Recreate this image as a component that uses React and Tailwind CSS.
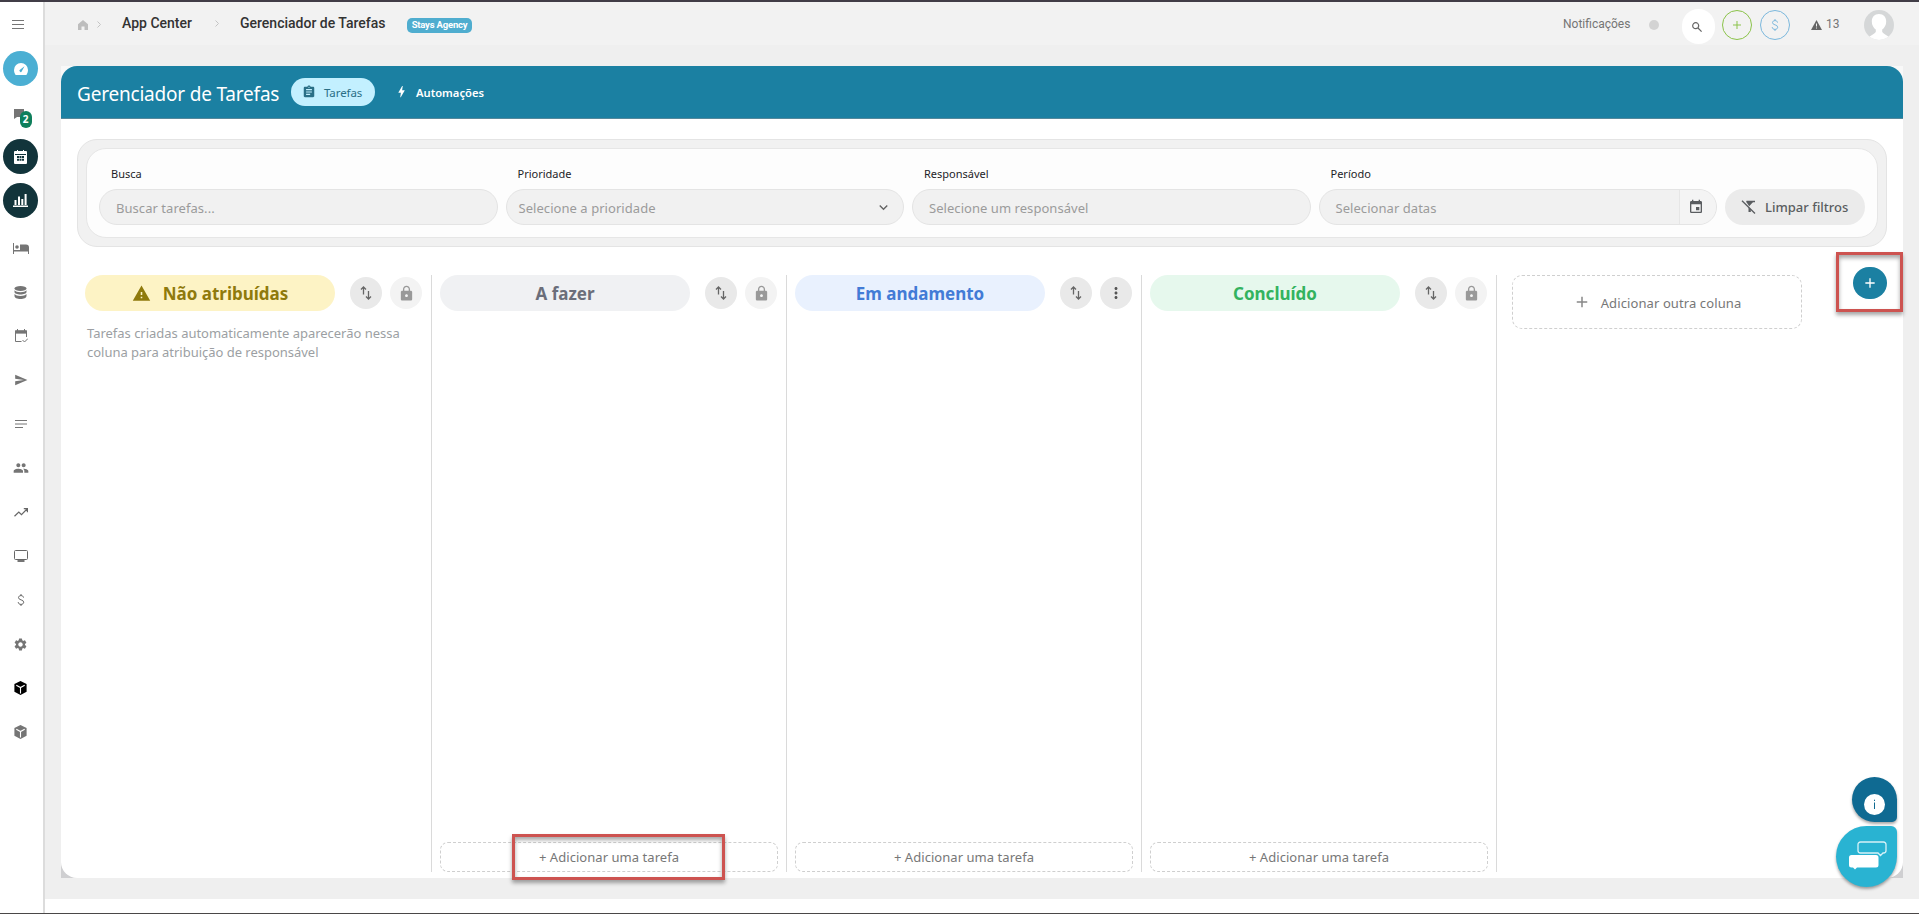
import React from "react";
import {
  MdAssignment,
  MdBolt,
  MdWarning,
  MdLock,
  MdMoreVert,
  MdEvent,
  MdKeyboardArrowDown,
  MdAdd,
  MdPeople,
  MdSettings,
  MdSend,
} from "react-icons/md";

const columns = [
  {
    title: "Não atribuídas",
    pill: "bg-[#fdf3c5] text-[#8f7a0c]",
    warning: true,
    locked: true,
    description:
      "Tarefas criadas automaticamente aparecerão nessa coluna para atribuição de responsável",
  },
  { title: "A fazer", pill: "bg-[#f0f1f3] text-[#6b6e7a]", locked: true, canAdd: true, highlight: true },
  { title: "Em andamento", pill: "bg-[#e9f1fe] text-[#427bd6]", locked: false, canAdd: true },
  { title: "Concluído", pill: "bg-[#e6f8ed] text-[#33b35f]", locked: true, canAdd: true },
];

function Gauge() {
  return (
    <svg width="14" height="12" viewBox="0 0 14 12">
      <path d="M7 0a7 7 0 0 0-7 7c0 1.900.7 3.500 1.600 5h10.800c.9-1.500 1.600-3.100 1.600-5a7 7 0 0 0-7-7z" fill="#fff" />
      <path d="M10.500 3.200 6.300 6.600a1.200 1.200 0 1 0 1.500 1.600z" fill="#4bafd3" />
    </svg>
  );
}

function Calendar() {
  return (
    <svg width="13" height="14" viewBox="0 0 13 14">
      <path fill="#fff" d="M1 1h2V0h1v1h5V0h1v1h2a1 1 0 0 1 1 1v11a1 1 0 0 1-1 1H1a1 1 0 0 1-1-1V2a1 1 0 0 1 1-1z" />
      <path fill="#12343b" d="M1 4h11v1H1zM3 6h2v2H3zM5.500 6h2v2h-2zM8 6h2v2H8zM3 8.700h2v2H3zM5.500 8.700h2v2h-2zM8 8.700h2v2H8z" />
    </svg>
  );
}

function Chart() {
  return (
    <svg width="15" height="13" viewBox="0 0 15 13" fill="#fff">
      <path d="M0 11.500h15V13H0zM1.500 6h2v5h-2zM5 2.500h2V11H5zM8.300 5h2v6h-2zM11.600 0h2v11h-2z" />
    </svg>
  );
}

function Bed() {
  return (
    <svg width="16" height="11" viewBox="0 0 16 11" fill="#757575">
      <path d="M0 0h1v7h6V1.500h6a3 3 0 0 1 3 3V11h-1V8.500H1V11H0z" />
      <circle cx="4" cy="4" r="1.800" />
    </svg>
  );
}

function Database() {
  return (
    <svg width="13" height="13" viewBox="0 0 13 13" fill="#757575">
      <ellipse cx="6.500" cy="2.500" rx="6" ry="2.500" />
      <path d="M.5 4.300c1 1.300 3.200 1.900 6 1.900s5-.6 6-1.900v1.600c0 1.400-2.700 2.500-6 2.500s-6-1.100-6-2.500zM.5 8c1 1.300 3.200 1.900 6 1.900s5-.6 6-1.900v1.900C12.500 11.600 9.800 13 6.500 13s-6-1.400-6-3.100z" />
    </svg>
  );
}

function CalendarCheck() {
  return (
    <svg width="14" height="14" viewBox="0 0 14 14" fill="none" stroke="#757575">
      <path d="M12.500 8V2h-11v10.500h6M8.500 11l2 2 3.500-3.500" />
      <path d="M1 1.500h12v3H1zM3 0h1v2H3zM10 0h1v2h-1z" fill="#757575" stroke="none" />
      <path d="M1.500 3h11" strokeWidth="2.500" />
    </svg>
  );
}

function Notes() {
  return (
    <svg width="12" height="8" viewBox="0 0 12 8" stroke="#757575">
      <path d="M0 .5h12M0 4h12M0 7.500h8" />
    </svg>
  );
}

function Trending() {
  return (
    <svg width="14" height="9" viewBox="0 0 14 9" fill="none" stroke="#666" strokeWidth="1.200">
      <path d="M.5 8.200 4.800 4l2.700 2.700L13 1M9.800.7h3.600v3.500" />
    </svg>
  );
}

function Monitor() {
  return (
    <svg width="14" height="12" viewBox="0 0 14 12" fill="none" stroke="#666">
      <rect x=".5" y=".5" width="13" height="9" rx="1" />
      <path d="M3.500 11h7" strokeWidth="1.800" />
    </svg>
  );
}

function Dollar({ color }) {
  return (
    <svg width="8" height="12" viewBox="0 0 8 12" fill="none" stroke={color}>
      <path d="M6.500 3.600C6.400 2.300 5.400 1.600 4 1.600S1.500 2.400 1.500 3.600C1.500 6.500 6.700 5.200 6.700 8.200c0 1.300-1.100 2.200-2.700 2.200S1.300 9.600 1.200 8.100M4 0v1.600M4 10.400V12" />
    </svg>
  );
}

function Cube({ color }) {
  return (
    <svg width="13" height="14" viewBox="0 0 13 14">
      <path d="M6.500 0 12.600 3v7.700L6.500 14 .4 10.700V3z" fill={color} />
      <path d="M2.300 4.200 6.500 6.500l4.200-2.300M6.500 6.500v6" fill="none" stroke="#fff" strokeWidth="1.100" />
    </svg>
  );
}

function Messages() {
  return (
    <span className="relative block h-3.5 w-4">
      <svg width="10" height="10" viewBox="0 0 10 10" className="absolute left-[1px] top-[-1px]">
        <path d="M0 0h10v8H3L0 10z" fill="#757575" />
      </svg>
      <span className="absolute left-[7px] top-[1px] flex h-[17px] w-[12px] items-center justify-center rounded-full bg-[#0f7f5c] text-[10px] font-bold text-white">
        2
      </span>
    </span>
  );
}

const menu = [
  { icon: <Gauge />, circle: "bg-[#4bafd3]" },
  { icon: <Messages />, circle: "pt-[8px]" },
  { icon: <Calendar />, circle: "bg-[#12343b]" },
  { icon: <Chart />, circle: "bg-[#12343b]" },
  { icon: <Bed />, circle: "pt-[7px]" },
  { icon: <Database />, circle: "pt-[7px]" },
  { icon: <CalendarCheck />, circle: "pt-[7px]" },
  { icon: <MdSend size={14} />, circle: "pt-[6px]" },
  { icon: <Notes />, circle: "pt-[6px]" },
  { icon: <MdPeople size={16} />, circle: "pt-[7px]" },
  { icon: <Trending />, circle: "pt-[7px]" },
  { icon: <Monitor />, circle: "pt-[7px]" },
  { icon: <Dollar color="#666" />, circle: "pt-[6px]" },
  { icon: <MdSettings size={15} />, circle: "pt-[7px]" },
  { icon: <Cube color="#000" />, circle: "pt-[6px]" },
  { icon: <Cube color="#757575" />, circle: "pt-[6px]" },
];

function Sidebar() {
  return (
    <aside className="flex w-[45px] shrink-0 flex-col border-r-2 border-[#dcdcdc] bg-white pl-[3px] text-[#757575]">
      <div className="flex h-[44px] items-center pl-[9px]">
        <svg width="12" height="9" viewBox="0 0 12 9" stroke="#757575">
          <path d="M0 .5h12M0 4.500h12M0 8.500h12" />
        </svg>
      </div>
      <nav className="flex flex-col gap-[9px] pt-[5px]">
        {menu.map((item, index) => (
          <div key={index} className={`flex size-[35px] items-center justify-center rounded-full ${item.circle}`}>
            {item.icon}
          </div>
        ))}
      </nav>
    </aside>
  );
}

function Chevron() {
  return (
    <svg width="4" height="7" viewBox="0 0 4 7" fill="none" stroke="#c4c4c4">
      <path d="M.5.5l3 3-3 3" />
    </svg>
  );
}

function TopBar() {
  return (
    <header className="flex h-[43px] items-center bg-[#f2f2f2] pl-[33px] pr-[25px] font-[Roboto]">
      <div className="flex w-[44px] items-center gap-[9px] pt-[2px]">
        <svg width="10" height="10" viewBox="0 0 10 10" fill="#bdbdbd">
          <path d="M5 0l5 4.200V10H6.500V6.500h-3V10H0V4.200z" />
        </svg>
        <Chevron />
      </div>
      <div className="flex w-[118px] items-center gap-[23px]">
        <span className="w-[70px] whitespace-nowrap pb-[2px] text-sm font-medium leading-5 text-[#333]">App Center</span>
        <Chevron />
      </div>
      <span className="w-[167px] whitespace-nowrap pb-[2px] text-sm font-medium leading-5 text-[#333]">Gerenciador de Tarefas</span>
      <span className="mt-[3px] flex h-[15px] w-[65px] items-center justify-center whitespace-nowrap rounded-[5px] bg-[#4fadcf] text-[9.500px] font-bold tracking-[-0.2px] text-white">
        Stays Agency
      </span>

      <div className="ml-auto flex items-center">
        <span className="mr-[19px] w-[67px] whitespace-nowrap text-xs text-[#757575]">Notificações</span>
        <span className="mr-[23px] mt-[3px] size-[10px] rounded-full bg-[#d3d3d3]" />
        <span className="mr-[7px] mt-[6px] flex h-[35px] w-[33px] items-center justify-center rounded-full bg-white pr-[3px]">
          <svg width="10" height="10" viewBox="0 0 10 10" fill="none" stroke="#666" strokeWidth="1.200">
            <circle cx="3.700" cy="3.700" r="3" />
            <path d="M6 6l3.600 3.600" />
          </svg>
        </span>
        <span className="mr-[8px] mt-[3px] flex size-[30px] items-center justify-center rounded-full border border-[#8bc34a]">
          <svg width="8" height="8" viewBox="0 0 8 8" stroke="#8bc34a">
            <path d="M4 0v8M0 4h8" />
          </svg>
        </span>
        <span className="mr-[21px] mt-[3px] flex size-[30px] items-center justify-center rounded-full border border-[#7bb8dd]">
          <Dollar color="#7bb8dd" />
        </span>
        <svg width="11" height="10" viewBox="0 0 11 10" className="mr-[4px] mt-[3px]">
          <path d="M5.500 0 11 10H0z" fill="#666" />
          <path d="M5.500 3.500v3M5.500 7.500v1" stroke="#f2f2f2" />
        </svg>
        <span className="mr-[25px] w-[13px] text-xs text-[#757575]">13</span>
        <svg width="30" height="30" viewBox="0 0 30 30" className="mt-[3px] rounded-full">
          <rect width="30" height="30" fill="#d5d7d8" />
          <path d="M15 4c-4.500 0-7.200 3-7.200 7.500 0 3.800 1.800 6.500 4 8v2.500C10 24.500 7 25 4.500 27.500L8 31h14l3.500-3.500C23 25 20 24.500 18.200 22v-2.500c2.200-1.500 4-4.200 4-8C22.200 7 19.500 4 15 4z" fill="#fff" />
        </svg>
      </div>
    </header>
  );
}

function Field({ label, placeholder, className = "pl-4", children }) {
  return (
    <div className="flex w-[398.5px] flex-col">
      <label className="h-[24px] pl-3 text-[11px] leading-[18px] text-[#1d1d28]">{label}</label>
      <div className={`flex h-9 items-center overflow-hidden rounded-[18px] border border-[#e4e4e4] bg-[#f1f1f1] ${className}`}>
        <span className="flex-1 pt-[2px] text-[13px] leading-5 tracking-[0.05px] text-[#9b9b9b]">{placeholder}</span>
        {children}
      </div>
    </div>
  );
}

function Filters() {
  return (
    <section className="mx-4 mt-5 rounded-[20px] border border-[#e4e4e4] bg-[#f1f1f1] px-[8px] py-[8px]">
      <div className="flex h-[90px] items-end gap-2 rounded-[20px] border border-[#e6e6e6] bg-[#fdfdfd] pb-[12px] pl-[12px]">
        <Field label="Busca" placeholder="Buscar tarefas..." />
        <Field label="Prioridade" placeholder="Selecione a prioridade" className="pl-[12px] pr-[11px]">
          <MdKeyboardArrowDown size={17} className="text-[#666]" />
        </Field>
        <Field label="Responsável" placeholder="Selecione um responsável" />
        <Field label="Período" placeholder="Selecionar datas">
          <span className="flex h-9 w-[37px] items-center justify-center border-l border-[#e6e6e6] bg-[#f4f4f4] pr-[4px] text-[#5a5d60]">
            <MdEvent size={16} />
          </span>
        </Field>
        <button className="flex h-9 w-[140px] items-center rounded-[18px] bg-[#ebebeb] pl-4 text-[13px] font-medium text-[#5a5d60]">
          <svg width="15" height="14" viewBox="0 0 15 14" className="mr-[9px]" fill="none" stroke="#5a5d60" strokeWidth="1.300">
            <path d="M1 .8l13 12.700M5.500 1.500H14" />
            <path d="M8.200 6.200 12.500 1.500H5zM7.500 7v5h2.300V9.500z" fill="#5a5d60" stroke="none" />
          </svg>
          <span className="pt-[2px]">Limpar filtros</span>
        </button>
      </div>
    </section>
  );
}

function RoundButton({ children, className }) {
  return <button className={`flex size-8 shrink-0 items-center justify-center rounded-full ${className}`}>{children}</button>;
}

function SortIcon() {
  return (
    <svg width="12" height="14" viewBox="0 0 12 14" fill="none" stroke="#666" strokeWidth="1.300">
      <path d="M3.500 8.500V1.200M1 3.500l2.500-2.500L6 3.500M8.500 5v7.500M6 10.500l2.500 2.500 2.500-2.500" />
    </svg>
  );
}

function Column({ column }) {
  return (
    <div className="flex w-[355px] flex-col border-r border-[#dadada] px-2">
      <div className="flex h-9 items-center">
        <h2 className={`flex h-9 w-[250px] shrink-0 items-center justify-center rounded-[18px] text-[17px] font-bold ${column.pill}`}>
          {column.warning && <MdWarning size={19} className="mr-[12px]" />}
          <span className="pt-[2px]">{column.title}</span>
        </h2>
        <RoundButton className="ml-[15px] bg-[#e9e9e9]">
          <SortIcon />
        </RoundButton>
        {column.locked ? (
          <RoundButton className="ml-[8px] bg-[#f3f3f3] text-[#999]">
            <MdLock size={17} />
          </RoundButton>
        ) : (
          <RoundButton className="ml-[8px] bg-[#e9e9e9] text-[#555]">
            <MdMoreVert size={18} />
          </RoundButton>
        )}
      </div>
      {column.description && (
        <p className="mt-[13px] w-[330px] pl-[2px] text-[13px] leading-[19px] tracking-[-0.02px] text-[#9c9fa3]">{column.description}</p>
      )}
      {column.canAdd && (
        <div className="relative mt-auto">
          <button className="h-[30px] w-full rounded-[8px] border border-dashed border-[#cfcfcf] text-[13px] leading-5 tracking-[0.05px] text-[#777]">
            + Adicionar uma tarefa
          </button>
          {column.highlight && (
            <span className="absolute left-[72px] top-[-8px] h-[46px] w-[213px] border-[3px] border-[#cd5350] shadow-[0_3px_4px_rgba(0,0,0,0.35),inset_0_3px_4px_rgba(0,0,0,0.35)]" />
          )}
        </div>
      )}
    </div>
  );
}

function ChatButtons() {
  return (
    <div className="absolute left-[1836px] top-[775px] flex w-[61px] flex-col items-end gap-[4px]">
      <button className="flex size-[45px] items-center justify-center rounded-[23px_23px_5px_23px] bg-[#0f6a92] pt-[9px] shadow-[0_2px_3px_rgba(0,0,0,0.35)]">
        <svg width="21" height="21" viewBox="0 0 21 21">
          <circle cx="10.500" cy="10.500" r="10.500" fill="#fff" />
          <path d="M10.500 8.500V15M10.500 5.700v1.300" stroke="#0f6a92" strokeWidth="1" />
        </svg>
      </button>
      <button className="flex size-[61px] items-center justify-center rounded-[31px_6px_31px_31px] bg-[#29b3d2] pb-[3px] pl-[2px] shadow-[0_2px_3px_rgba(0,0,0,0.35)]">
        <svg width="39" height="29" viewBox="0 0 39 29" className="shrink-0">
          <path d="M12.500 1h23a2.500 2.500 0 0 1 2.500 2.500v6a2.500 2.500 0 0 1-2.500 2.500H35l-2.500 2.500L30 12H12.500A2.500 2.500 0 0 1 10 9.500v-6A2.500 2.500 0 0 1 12.500 1z" fill="none" stroke="#d6f2f8" strokeWidth="1.300" />
          <path d="M3.500 14h24.500a2.500 2.500 0 0 1 2.500 2.500v7.500a2.500 2.500 0 0 1-2.500 2.500H9L7 28.500 5 26.500H3.500A2.500 2.500 0 0 1 1 24v-7.500A2.500 2.500 0 0 1 3.500 14z" fill="#fff" />
        </svg>
      </button>
    </div>
  );
}

export default function App() {
  return (
    <div className="relative flex h-[914px] w-[1919px] overflow-hidden border-b border-t-2 border-b-[#4a4747] border-t-[#413d47] bg-white font-['Noto_Sans',sans-serif]">
      <Sidebar />
      <div className="mb-[14px] flex flex-1 flex-col bg-[#efefef]">
        <TopBar />
        <div className="mx-4 mt-[21px] bg-linear-to-b from-[#f8f8f8] from-50% to-[#cfcfd1] to-50%">
          <main className="flex h-[812px] flex-col rounded-[16px] bg-white">
            <div className="flex h-[53px] shrink-0 items-center rounded-t-[16px] border-b border-[#55889b] bg-[#1b80a2] pl-4">
              <h1 className="w-[214px] whitespace-nowrap pt-[5px] text-[19px] tracking-[-0.2px] text-white">Gerenciador de Tarefas</h1>
              <button className="flex h-7 w-[84px] items-center rounded-full bg-[#c3f0ff] pl-[11px] text-[11.500px] tracking-[-0.1px] text-[#2a6f86]">
                <MdAssignment size={14} className="mr-[8px]" />
                <span className="pt-[2px]">Tarefas</span>
              </button>
              <button className="ml-[19px] flex items-center text-[11.200px] font-semibold text-white">
                <MdBolt size={15} className="mr-[7px]" />
                <span className="pt-[2px]">Automações</span>
              </button>
            </div>
            <Filters />
            <div className="mt-[28px] flex h-[597px] pl-4">
              <div className="flex">
                {columns.map((column) => (
                  <Column key={column.title} column={column} />
                ))}
              </div>
              <button className="ml-[15px] flex h-[54px] w-[290px] items-center justify-center gap-[10px] rounded-[10px] border border-dashed border-[#cfcfcf] text-[13px] tracking-[0.1px] text-[#777]">
                <MdAdd size={18} className="text-[#888]" />
                <span className="pt-[3px]">Adicionar outra coluna</span>
              </button>
            </div>
          </main>
        </div>
      </div>

      {/* floating action button with its highlight frame */}
      <div className="absolute left-[1836px] top-[250px] flex h-[60px] w-[67px] items-center justify-center border-[3px] border-[#cd5350] pt-[2px] shadow-[0_3px_4px_rgba(0,0,0,0.35),inset_0_3px_4px_rgba(0,0,0,0.35)]">
        <button className="flex h-[32px] w-[34px] items-center justify-center rounded-full bg-[#1b80a2] text-white">
          <MdAdd size={16} />
        </button>
      </div>
      <ChatButtons />
    </div>
  );
}
